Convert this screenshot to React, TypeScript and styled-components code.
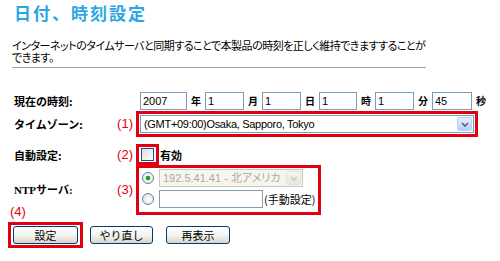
import styled, { createGlobalStyle } from "styled-components";

const RED = "#e0000f";
const CJK = `"Noto Sans CJK JP", sans-serif`;
const LATIN = `"Liberation Sans", "Noto Sans CJK JP", sans-serif`;

const GlobalStyle = createGlobalStyle`
  html, body {
    margin: 0;
    padding: 0;
    background: #ffffff;
  }
  body {
    font-family: ${CJK};
    color: #000;
  }
`;

const Page = styled.div`
  width: 500px;
  height: 261px;
  overflow: hidden;
`;

const Title = styled.h1`
  margin: 0 0 0 14px;
  font-size: 17px;
  line-height: 25px;
  font-weight: 700;
  letter-spacing: 2px;
  color: #2aa7e3;
`;

const Description = styled.div`
  margin: 14px 0 0 12px;
  font-size: 11px;
  font-feature-settings: "palt";
  letter-spacing: -0.5px;
  white-space: nowrap;
`;

const DescLine = styled.div`
  height: 12px;
  line-height: 12px;
`;

const Rule = styled.hr`
  margin: 4px 0 0 12px;
  width: 414px;
  height: 0;
  border: 0;
  border-top: 1px solid #aca899;
`;

const Form = styled.div`
  margin: 24px 0 0 14px;
  display: flex;
  flex-direction: column;
`;

const Row = styled.div<{ $top?: number }>`
  display: flex;
  align-items: center;
  margin-top: ${(p) => p.$top ?? 0}px;
`;

const Label = styled.div<{ $serif?: boolean }>`
  width: 103px;
  font-size: 11px;
  font-weight: 700;
  line-height: 14px;
  font-family: ${(p) => (p.$serif ? `"Liberation Serif", "Noto Sans CJK JP", serif` : CJK)};
`;

const Marker = styled.div`
  width: 16px;
  padding-right: 3px;
  text-align: right;
  font-family: ${LATIN};
  font-size: 13px;
  line-height: 14px;
  color: ${RED};
  white-space: nowrap;
`;

const Outline = styled.div<{ $pad: string }>`
  border: 3px solid ${RED};
  padding: ${(p) => p.$pad};
  display: flex;
  flex-direction: column;
  gap: 3px;
`;

const Fields = styled.div`
  display: flex;
  align-items: center;
  padding-left: 4px;
`;

const TextBox = styled.input<{ $w: number }>`
  box-sizing: border-box;
  width: ${(p) => p.$w}px;
  height: 18px;
  margin: 0;
  padding: 0 2px;
  border: 1px solid #7f9db9;
  background: #ffffff;
  font-family: ${LATIN};
  font-size: 11px;
  color: #000;
  outline: none;
`;

const Unit = styled.span`
  margin: 0 4px;
  font-size: 10px;
  font-weight: 700;
  line-height: 14px;
`;

const Combo = styled.div<{ $w: number; $disabled?: boolean }>`
  box-sizing: border-box;
  width: ${(p) => p.$w}px;
  height: 18px;
  display: flex;
  align-items: center;
  padding: 0 1px 0 3px;
  border: 1px solid ${(p) => (p.$disabled ? "#c9c7ba" : "#7f9db9")};
  background: ${(p) => (p.$disabled ? "#f6f5ef" : "#ffffff")};
`;

const ComboText = styled.span<{ $disabled?: boolean; $tight?: boolean }>`
  flex: 1;
  overflow: hidden;
  white-space: nowrap;
  font-family: ${LATIN};
  font-size: 11px;
  line-height: 14px;
  font-feature-settings: "palt";
  letter-spacing: ${(p) => (p.$tight ? "-0.3px" : "0")};
  color: ${(p) => (p.$disabled ? "#aca899" : "#000")};
`;

const ComboArrow = styled.span<{ $disabled?: boolean }>`
  box-sizing: border-box;
  width: 15px;
  height: 14px;
  display: flex;
  align-items: center;
  justify-content: center;
  border: 1px solid ${(p) => (p.$disabled ? "#e3e1d8" : "#bad1fc")};
  border-radius: 2px;
  background: ${(p) =>
    p.$disabled
      ? "linear-gradient(#f7f6f1, #e8e6dd)"
      : "linear-gradient(#e6eefe, #b9cdf7)"};
`;

const CheckBox = styled.input.attrs({ type: "checkbox" })`
  appearance: none;
  box-sizing: border-box;
  margin: 0;
  width: 13px;
  height: 13px;
  border: 1px solid #1c5180;
  background: linear-gradient(135deg, #dcdcd7, #ffffff);
`;

const CheckText = styled.span`
  margin-left: 1px;
  font-size: 11px;
  font-weight: 700;
  line-height: 14px;
`;

const Line = styled.div`
  display: flex;
  align-items: center;
`;

const Radio = styled.input.attrs({ type: "radio" })`
  appearance: none;
  box-sizing: border-box;
  margin: 0 5px 0 0;
  width: 12px;
  height: 12px;
  border-radius: 50%;
  border: 1px solid #5f7fa8;
  background: radial-gradient(circle at 60% 60%, #ffffff, #dcdcd5);

  &:checked {
    background: radial-gradient(circle, #21a121 0 2px, #f2f2ec 2.6px);
  }
`;

const Note = styled.span`
  margin-left: 1px;
  font-size: 11px;
  line-height: 14px;
`;

const Footer = styled.div`
  margin: -10px 0 0 8px;
  display: flex;
  flex-direction: column;
  align-items: flex-start;
`;

const FooterMarker = styled(Marker)`
  width: auto;
  padding: 0 0 0 2px;
  text-align: left;
`;

const ButtonBar = styled.div`
  margin-top: 3px;
  display: flex;
  align-items: center;
  gap: 7px;
`;

const Button = styled.button<{ $w: number; $ml?: number }>`
  box-sizing: border-box;
  width: ${(p) => p.$w}px;
  height: 18px;
  margin: 0 0 0 ${(p) => p.$ml ?? 0}px;
  padding: 0;
  border: 1px solid #003c74;
  border-radius: 3px;
  background: linear-gradient(#ffffff, #f3f3ee 55%, #d9d4c8);
  font-family: ${CJK};
  font-size: 11px;
  line-height: 14px;
  color: #000;
`;

const Chevron = ({ color }: { color: string }) => (
  <svg width="8" height="5" viewBox="0 0 8 5">
    <path d="M1 1 L4 4 L7 1" fill="none" stroke={color} strokeWidth="1.6" />
  </svg>
);

const timeFields: { value: string; unit: string; w: number }[] = [
  { value: "2007", unit: "年", w: 47 },
  { value: "1", unit: "月", w: 39 },
  { value: "1", unit: "日", w: 39 },
  { value: "1", unit: "時", w: 38 },
  { value: "1", unit: "分", w: 39 },
  { value: "45", unit: "秒", w: 40 },
];

export default function App() {
  return (
    <Page>
      <GlobalStyle />
      <Title>日付、時刻設定</Title>
      <Description>
        <DescLine>
          インターネットのタイムサーバと同期することで本製品の時刻を正しく維持できますすることが
        </DescLine>
        <DescLine>できます。</DescLine>
      </Description>
      <Rule />
      <Form>
        <Row>
          <Label>現在の時刻:</Label>
          <Marker />
          <Fields>
            {timeFields.map((f) => (
              <Line key={f.unit}>
                <TextBox $w={f.w} defaultValue={f.value} />
                <Unit>{f.unit}</Unit>
              </Line>
            ))}
          </Fields>
        </Row>
        <Row $top={1}>
          <Label>タイムゾーン:</Label>
          <Marker>(1)</Marker>
          <Outline $pad="1px">
            <Combo $w={334}>
              <ComboText $tight>(GMT+09:00)Osaka, Sapporo, Tokyo</ComboText>
              <ComboArrow>
                <Chevron color="#4d6185" />
              </ComboArrow>
            </Combo>
          </Outline>
        </Row>
        <Row $top={7}>
          <Label>自動設定:</Label>
          <Marker>(2)</Marker>
          <Outline $pad="1px 2px">
            <CheckBox />
          </Outline>
          <CheckText>有効</CheckText>
        </Row>
        <Row>
          <Label $serif>NTPサーバ:</Label>
          <Marker>(3)</Marker>
          <Outline $pad="1px 3px 4px 3px">
            <Line>
              <Radio name="ntp" defaultChecked />
              <Combo $w={144} $disabled>
                <ComboText $disabled>192.5.41.41 - 北アメリカ</ComboText>
                <ComboArrow $disabled>
                  <Chevron color="#c9c7ba" />
                </ComboArrow>
              </Combo>
            </Line>
            <Line>
              <Radio name="ntp" />
              <TextBox $w={104} />
              <Note>(手動設定)</Note>
            </Line>
          </Outline>
        </Row>
      </Form>
      <Footer>
        <FooterMarker>(4)</FooterMarker>
        <ButtonBar>
          <Outline $pad="1px 2px">
            <Button $w={65}>設定</Button>
          </Outline>
          <Button $w={63}>やり直し</Button>
          <Button $w={64} $ml={6}>
            再表示
          </Button>
        </ButtonBar>
      </Footer>
    </Page>
  );
}
